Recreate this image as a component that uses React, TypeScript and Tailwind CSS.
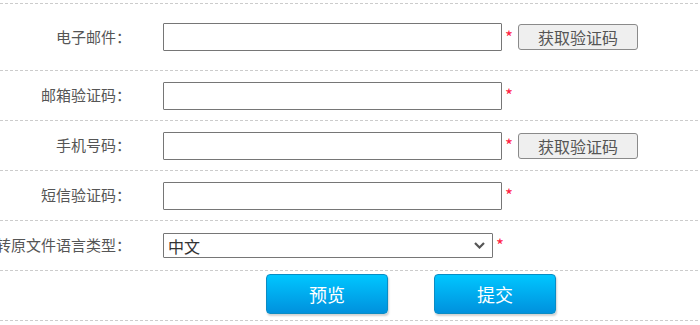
import React from 'react';

const font = { fontFamily: '"Microsoft YaHei", "Noto Sans CJK SC", "Noto Sans", sans-serif' };

interface RowProps {
  label: string;
  height: string;
  children: React.ReactNode;
}

const Row: React.FC<RowProps> = ({ label, height, children }) => (
  <div className={`flex items-center border-b border-dashed border-[#cccccc] ${height}`}>
    <div className="w-[131px] shrink-0 text-[15px] text-[#555555] whitespace-nowrap overflow-hidden flex justify-end">
      <span>{label}</span>
    </div>
    <div className="flex items-center pl-[32px]">{children}</div>
  </div>
);

const Star = () => <span className="ml-[3px] text-[17px] leading-none text-[#ff2244] relative top-[-1px]">*</span>;

const CodeButton = () => (
  <button className="ml-[5px] w-[120px] h-[26px] rounded-[3px] border border-[#8a8a8a] bg-[#efefef] text-[16px] leading-none text-[#555555]">
    获取验证码
  </button>
);

const TextInput = () => (
  <input type="text" className="w-[339px] h-[28px] border border-[#767676] rounded-[1px] bg-white outline-none px-1" />
);

const BlueButton: React.FC<{ text: string }> = ({ text }) => (
  <button className="w-[122px] h-[40px] rounded-[4px] border border-[#0a8cc4] bg-gradient-to-b from-[#00c6ff] to-[#0091dd] text-white text-[18px] leading-none shadow-[1px_2px_2px_rgba(0,0,0,0.18)]">
    {text}
  </button>
);

export default function App() {
  return (
    <div className="w-[700px] h-[325px] bg-white overflow-hidden" style={font}>
      <div className="w-[698px]">
        <div className="h-[4px] border-b border-dashed border-[#cccccc]" />
        <Row label="电子邮件：" height="h-[67px]">
          <TextInput />
          <Star />
          <CodeButton />
        </Row>
        <Row label="邮箱验证码：" height="h-[50px]">
          <TextInput />
          <Star />
        </Row>
        <Row label="手机号码：" height="h-[50px]">
          <TextInput />
          <Star />
          <CodeButton />
        </Row>
        <Row label="短信验证码：" height="h-[50px]">
          <TextInput />
          <Star />
        </Row>
        <Row label="转原文件语言类型：" height="h-[50px]">
          <div className="relative">
            <select className="appearance-none block w-[330px] h-[25px] border border-[#767676] rounded-[1px] bg-white text-[16px] text-[#333333] pl-[4px] outline-none">
              <option>中文</option>
              <option>English</option>
            </select>
            <svg className="absolute right-[8px] top-[9px] pointer-events-none" width="11" height="7" viewBox="0 0 11 7">
              <path d="M1 1l4.5 4.5L10 1" fill="none" stroke="#555555" strokeWidth="2.2" />
            </svg>
          </div>
          <Star />
        </Row>
        <div className="h-[50px] border-b border-dashed border-[#cccccc] flex items-center gap-[46px] pl-[266px] pb-[3px]">
          <BlueButton text="预览" />
          <BlueButton text="提交" />
        </div>
      </div>
    </div>
  );
}
